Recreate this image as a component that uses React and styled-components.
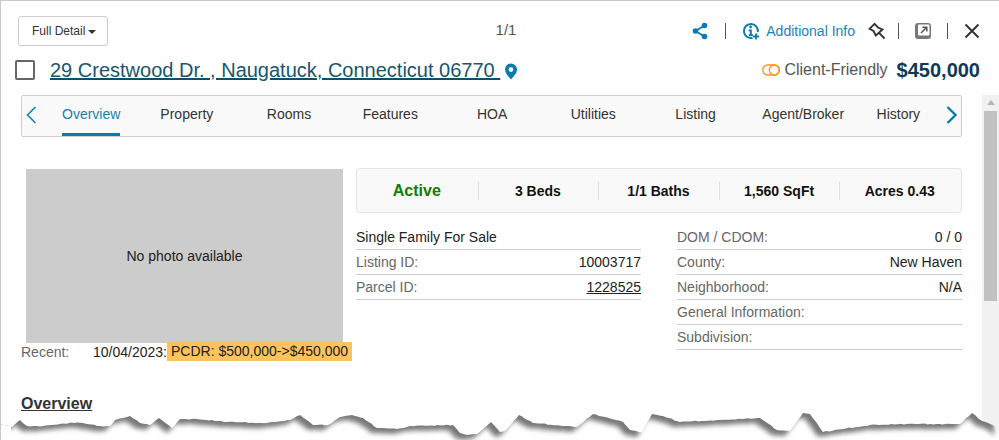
import React from "react";
import styled, { createGlobalStyle } from "styled-components";

const Global = createGlobalStyle`
  html, body { margin: 0; padding: 0; background: #fff; }
  body { font-family: "Liberation Sans", Arial, sans-serif; font-size: 14px; color: #222; }
  * { box-sizing: border-box; }
`;

const Sheet = styled.div`
  position: relative;
  width: 999px;
  height: 440px;
  overflow: hidden;
  background: #fff;
  border-top: 1px solid #c8c8c8;
  border-left: 1px solid #c8c8c8;
`;

const TopRow = styled.div`
  display: grid;
  grid-template-columns: 1fr auto 1fr;
  align-items: center;
  height: 30px;
  margin-top: 15px;
  padding: 0 5px 0 17px;
`;

const ViewButton = styled.button`
  justify-self: start;
  display: flex;
  align-items: center;
  gap: 3px;
  width: 90px;
  height: 30px;
  padding: 0 0 0 13px;
  background: #fff;
  border: 1px solid #ccc;
  border-radius: 3px;
  font: 12px "Liberation Sans", Arial, sans-serif;
  color: #333;
`;

const Caret = styled.span`
  width: 0;
  height: 0;
  margin-top: 2px;
  border-left: 4px solid transparent;
  border-right: 4px solid transparent;
  border-top: 4px solid #333;
`;

const Pager = styled.div`
  font-size: 15px;
  color: #555;
  margin-bottom: 3px;
`;

const Tools = styled.div`
  justify-self: end;
  display: flex;
  align-items: center;
  padding-right: 14px;
`;

const ToolSep = styled.span`
  width: 1px;
  height: 16px;
  background: #555;
  margin: 0 ${(p) => p.$right ?? 16}px 0 ${(p) => p.$left ?? 16}px;
`;

const InfoLink = styled.a`
  display: flex;
  align-items: center;
  gap: 6px;
  font-size: 14px;
  color: #1b84b8;
  margin-right: 13px;
`;

const Icon = styled.svg`
  display: block;
  flex: none;
`;

const PinSlot = styled.span`
  margin-top: 3px;
`;

const AddressRow = styled.div`
  display: flex;
  align-items: center;
  height: 24px;
  margin-top: 12px;
  padding: 0 19px 0 14px;
`;

const Check = styled.span`
  width: 20px;
  height: 20px;
  border: 2px solid #666;
  border-radius: 2px;
  margin-right: 15px;
`;

const Address = styled.a`
  font-size: 20px;
  color: #17566f;
  text-decoration: underline;
  text-decoration-color: #0f4e68;
  white-space: pre;
  margin-right: 4px;
`;

const PriceBox = styled.div`
  margin-left: auto;
  display: flex;
  align-items: center;
`;

const FriendlyLabel = styled.span`
  font-size: 16px;
  color: #555;
  margin: 0 9px 0 4px;
`;

const Price = styled.span`
  font-size: 20px;
  font-weight: 700;
  color: #0e3a57;
`;

const Main = styled.div`
  display: flex;
  margin-top: 13px;
`;

const Content = styled.div`
  flex: 1;
  min-width: 0;
  padding: 0 20px 0 20px;
`;

const TabStrip = styled.div`
  display: flex;
  align-items: stretch;
  height: 42px;
  background: #f9f9f9;
  border: 1px solid #ccc;
  border-radius: 2px;
`;

const Arrow = styled.div`
  display: flex;
  align-items: center;
  width: ${(p) => p.$width}px;
  padding-left: ${(p) => p.$pad}px;
  padding-bottom: 3px;
  margin-left: ${(p) => (p.$end ? "auto" : "0")};
`;

const Tab = styled.div`
  display: flex;
  align-items: center;
  margin-left: ${(p) => p.$gap}px;
  padding-bottom: 1px;
  font-size: 14px;
  color: ${(p) => (p.$active ? "#1b7fae" : "#333")};
  border-bottom: 3px solid ${(p) => (p.$active ? "#0b7ab0" : "transparent")};
`;

const Details = styled.div`
  display: grid;
  grid-template-columns: 322px 606px;
  column-gap: 13px;
  margin-top: 31px;
`;

const Photo = styled.div`
  display: flex;
  align-items: center;
  justify-content: center;
  height: 174px;
  margin: 1px 0 0 5px;
  background: #ccc;
  color: #222;
  font-size: 14px;
`;

const RecentRow = styled.div`
  position: relative;
  display: flex;
  align-items: center;
  height: 19px;
  margin-top: -1px;
  font-size: 14px;
  width: 340px;
`;

const RecentLabel = styled.span`
  width: 72px;
  color: #666;
`;

const Highlight = styled.span`
  height: 19px;
  line-height: 19px;
  padding: 0 4px;
  background: #fcc35f;
  color: #222;
`;

const StatBar = styled.div`
  display: grid;
  grid-template-columns: repeat(5, 1fr);
  align-items: center;
  height: 45px;
  padding-right: 1px;
  background: #f9f9f9;
  border: 1px solid #e4e4e4;
  border-radius: 4px;
`;

const Stat = styled.div`
  text-align: center;
  height: 18px;
  line-height: 18px;
  padding-right: 1px;
  font-weight: 700;
  font-size: ${(p) => (p.$status ? 16 : 14)}px;
  color: ${(p) => (p.$status ? "#0a8000" : "#111")};
  border-left: ${(p) => (p.$status ? "0" : "1px solid #e0e0e0")};
`;

const Lists = styled.div`
  display: grid;
  grid-template-columns: 285px 285px;
  column-gap: 36px;
  margin-top: 12px;
`;

const Row = styled.div`
  display: flex;
  justify-content: space-between;
  align-items: center;
  height: 25px;
  border-bottom: 1px solid #ccc;
  font-size: 14px;
`;

const Key = styled.span`
  color: ${(p) => (p.$plain ? "#222" : "#666")};
`;

const Value = styled.span`
  color: #222;
  text-decoration: ${(p) => (p.$link ? "underline" : "none")};
`;

const SectionTitle = styled.div`
  margin-top: 34px;
  font-size: 16px;
  line-height: 18px;
  font-weight: 700;
  color: #333;
  text-decoration: underline;
`;

const Scrollbar = styled.div`
  flex: none;
  width: 17px;
  height: 345px;
  background: #f1f1f1;
  padding: 0 2px;
`;

const ScrollUp = styled.div`
  width: 0;
  height: 0;
  margin: 5px auto 6px;
  border-left: 4px solid transparent;
  border-right: 4px solid transparent;
  border-bottom: 5px solid #b4b4b4;
`;

const Thumb = styled.div`
  height: 190px;
  background: #c1c1c1;
`;

const TearOverlay = styled.svg`
  position: absolute;
  left: -1px;
  top: 398px;
  pointer-events: none;
`;

const pts = [
  [0, 423], [12, 426], [20, 419], [27, 425], [43, 425], [60, 423], [77, 421.5], [100, 425], [110, 425], [115, 419],
  [130, 415], [140, 422], [150, 424], [159, 417], [172, 427], [180, 418], [197, 418], [227, 421], [267, 422],
  [290, 419], [300, 414], [313, 424], [328, 424], [340, 416], [352, 414], [363, 417], [377, 427], [397, 428],
  [410, 425], [453, 424], [460, 432], [467, 434], [477, 433], [491, 421], [500, 431], [505, 430], [519, 414],
  [533, 422], [577, 426], [593, 413], [623, 421], [630, 429], [642, 431], [652, 413], [663, 415], [680, 421],
  [720, 419], [760, 417], [777, 429], [790, 430], [803, 412], [810, 413], [823, 431], [870, 424], [907, 423],
  [960, 423], [972, 412], [982, 420], [993, 424], [999, 430],
];

function tearPath() {
  const out = [];
  let seed = 7;
  for (let i = 0; i < pts.length - 1; i++) {
    const [x0, y0] = pts[i];
    const [x1, y1] = pts[i + 1];
    const steps = Math.max(1, Math.round((x1 - x0) / 3));
    for (let s = 0; s < steps; s++) {
      seed = (seed * 97 + 13) % 101;
      const n = s === 0 ? 0 : (seed / 100 - 0.5) * 1;
      const x = x0 + ((x1 - x0) * s) / steps;
      const y = y0 + ((y1 - y0) * s) / steps + n;
      out.push(`${x.toFixed(1)} ${(y - 398).toFixed(1)}`);
    }
  }
  out.push(`999 ${430 - 398}`);
  return "M" + out.join(" L");
}

function TornEdge() {
  const edge = tearPath();
  return (
    <TearOverlay width="999" height="42" viewBox="0 0 999 42">
      <defs>
        <clipPath id="below">
          <path d={`${edge} L999 42 L0 42 Z`} />
        </clipPath>
        <filter id="soft" x="-5%" y="-50%" width="110%" height="200%">
          <feGaussianBlur stdDeviation="2.6" />
        </filter>
      </defs>
      <g clipPath="url(#below)">
        <rect width="999" height="42" fill="#fff" />
        <path d={`${edge} L999 -10 L0 -10 Z`} fill="#777" filter="url(#soft)" transform="translate(-5 5)" />
        <rect width="11" height="42" fill="#fff" />
      </g>
    </TearOverlay>
  );
}

const blue = "#0b7ab0";

const ShareIcon = () => (
  <Icon width="16" height="18" viewBox="0 0 16 18">
    <path d="M12.5 3.5 L3.5 9 L12.5 14.5" fill="none" stroke={blue} strokeWidth="1.8" />
    <circle cx="12.5" cy="3.5" r="2.8" fill={blue} />
    <circle cx="3.5" cy="9" r="2.8" fill={blue} />
    <circle cx="12.5" cy="14.5" r="2.8" fill={blue} />
  </Icon>
);

const InfoIcon = () => (
  <Icon width="18" height="18" viewBox="0 0 18 18">
    <path d="M10.5 15.8 A7 7 0 1 1 15.8 10" fill="none" stroke={blue} strokeWidth="2" />
    <circle cx="8.6" cy="5" r="1.4" fill={blue} />
    <path d="M6.6 7.6 H9.8 V12.2 H11 V14 H6.8 V12.2 H7.8 V9.2 H6.6 Z" fill={blue} />
    <path d="M14 11.5 V17.5 M11 14.5 H17" stroke={blue} strokeWidth="1.8" />
  </Icon>
);

const PinIcon = () => (
  <Icon width="18" height="18" viewBox="0 0 18 18">
    <path d="M6.5 1.8 L1.5 6.8 L5.5 9 L7.8 13.5 L14.5 7.5 L10 5.5 Z" fill="none" stroke="#333" strokeWidth="1.9" strokeLinejoin="miter" />
    <path d="M11 10.8 L16.5 16.5" stroke="#333" strokeWidth="1.9" />
  </Icon>
);

const PopoutIcon = () => (
  <Icon width="16" height="16" viewBox="0 0 16 16">
    <rect x="0" y="0" width="16" height="16" rx="3" fill="#777" />
    <rect x="3" y="1.5" width="11.5" height="11" rx="1" fill="#fff" />
    <path d="M6 10 L11.5 4.5 M7.5 4.2 H11.8 V8.5" fill="none" stroke="#555" strokeWidth="1.5" />
  </Icon>
);

const CloseIcon = () => (
  <Icon width="16" height="16" viewBox="0 0 16 16">
    <path d="M1.5 1.5 L14.5 14.5 M14.5 1.5 L1.5 14.5" stroke="#333" strokeWidth="2" />
  </Icon>
);

const MapPin = () => (
  <Icon width="14" height="17" viewBox="0 0 14 17">
    <path fillRule="evenodd" d="M7 0.5 A6 6 0 0 1 13 6.5 C13 10.5 9 14 7 16.5 C5 14 1 10.5 1 6.5 A6 6 0 0 1 7 0.5 Z M7 4.3 A2.3 2.3 0 1 0 7 8.9 A2.3 2.3 0 1 0 7 4.3 Z" fill={blue} />
  </Icon>
);

const ToggleIcon = () => (
  <Icon width="18" height="12" viewBox="0 0 18 12">
    <rect x="0.7" y="1" width="16.6" height="10" rx="5" fill="none" stroke="#f7941d" strokeWidth="1.3" />
    <circle cx="12.3" cy="6" r="5" fill="none" stroke="#f7941d" strokeWidth="1.3" />
  </Icon>
);

const ChevronLeft = () => (
  <Icon width="11" height="18" viewBox="0 0 11 18">
    <path d="M9.5 1 L1.5 9 L9.5 17" fill="none" stroke="#1b84b8" strokeWidth="1.7" />
  </Icon>
);

const ChevronRight = () => (
  <Icon width="11" height="18" viewBox="0 0 11 18">
    <path d="M1.5 1 L9.5 9 L1.5 17" fill="none" stroke="#0b7ab0" strokeWidth="2.3" />
  </Icon>
);

const tabs = [
  ["Overview", 0],
  ["Property", 40],
  ["Rooms", 53.5],
  ["Features", 51.5],
  ["HOA", 59],
  ["Utilities", 63.5],
  ["Listing", 59.5],
  ["Agent/Broker", 46.5],
  ["History", 32.5],
];

const stats = ["3 Beds", "1/1 Baths", "1,560 SqFt", "Acres 0.43"];

const leftRows = [
  ["Listing ID:", "10003717"],
  ["Parcel ID:", "1228525", true],
];

const rightRows = [
  ["DOM / CDOM:", "0 / 0"],
  ["County:", "New Haven"],
  ["Neighborhood:", "N/A"],
  ["General Information:", ""],
  ["Subdivision:", ""],
];

export default function App() {
  return (
    <>
      <Global />
      <Sheet>
        <TopRow>
          <ViewButton>
            Full Detail <Caret />
          </ViewButton>
          <Pager>1/1</Pager>
          <Tools>
            <ShareIcon />
            <ToolSep $left={17} $right={16} />
            <InfoLink>
              <InfoIcon />
              Additional Info
            </InfoLink>
            <PinIcon />
            <ToolSep $left={12} $right={16} />
            <PopoutIcon />
            <ToolSep $left={16} $right={16} />
            <CloseIcon />
          </Tools>
        </TopRow>
        <AddressRow>
          <Check />
          <Address>29 Crestwood Dr. , Naugatuck, Connecticut 06770 </Address>
          <PinSlot>
            <MapPin />
          </PinSlot>
          <PriceBox>
            <ToggleIcon />
            <FriendlyLabel>Client-Friendly</FriendlyLabel>
            <Price>$450,000</Price>
          </PriceBox>
        </AddressRow>
        <Main>
          <Content>
            <TabStrip>
              <Arrow $width={40} $pad={4}>
                <ChevronLeft />
              </Arrow>
              {tabs.map(([label, gap], i) => (
                <Tab key={label} $gap={gap} $active={i === 0}>
                  {label}
                </Tab>
              ))}
              <Arrow $width={17} $pad={2} $end>
                <ChevronRight />
              </Arrow>
            </TabStrip>
            <Details>
              <div>
                <Photo>No photo available</Photo>
                <RecentRow>
                  <RecentLabel>Recent:</RecentLabel>
                  <span>10/04/2023:</span>
                  <Highlight>PCDR: $500,000-&gt;$450,000</Highlight>
                </RecentRow>
              </div>
              <div>
                <StatBar>
                  <Stat $status>Active</Stat>
                  {stats.map((s) => (
                    <Stat key={s}>{s}</Stat>
                  ))}
                </StatBar>
                <Lists>
                  <div>
                    <Row>
                      <Key $plain>Single Family For Sale</Key>
                    </Row>
                    {leftRows.map(([k, v, link]) => (
                      <Row key={k}>
                        <Key>{k}</Key>
                        <Value $link={link}>{v}</Value>
                      </Row>
                    ))}
                  </div>
                  <div>
                    {rightRows.map(([k, v]) => (
                      <Row key={k}>
                        <Key>{k}</Key>
                        <Value>{v}</Value>
                      </Row>
                    ))}
                  </div>
                </Lists>
              </div>
            </Details>
            <SectionTitle>Overview</SectionTitle>
          </Content>
          <Scrollbar>
            <ScrollUp />
            <Thumb />
          </Scrollbar>
        </Main>
        <TornEdge />
      </Sheet>
    </>
  );
}
